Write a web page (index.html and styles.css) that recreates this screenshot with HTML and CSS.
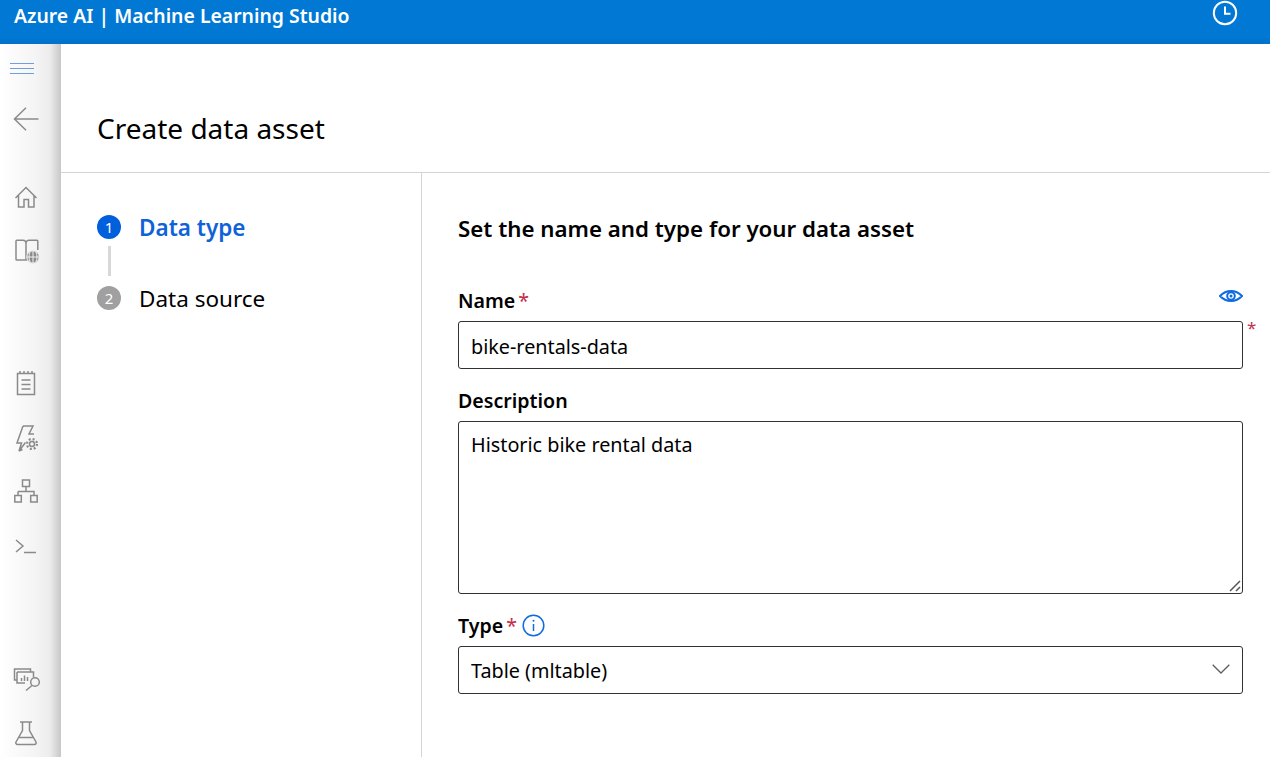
FILE: index.html
```html
<!DOCTYPE html>
<html lang="en">
<head>
    <meta charset="UTF-8">
    <meta name="viewport" content="width=device-width, initial-scale=1.0">
    <title>Create data asset</title>
    <link rel="stylesheet" href="styles.css">
</head>
<body>
    <header class="topbar">
        <span class="brand">Azure AI | Machine Learning Studio</span>
        <svg class="clock" viewBox="0 0 26 26" width="26" height="26"><circle cx="13" cy="13" r="11.2"/><path d="M13 6.500v7.200h5.500"/></svg>
    </header>
    <div class="app">
        <nav class="rail">
            <div class="rail-group menu-group">
                <svg class="rail-icon" viewBox="0 0 24 24"><path class="menu-lines" d="M-4 7.500h24M-4 12.500h24M-4 17.500h24"/></svg>
            </div>
            <div class="rail-group back-group">
                <svg class="rail-icon" viewBox="0 0 24 24"><path d="M.5 12h24M12 .8.5 12 12 23.200"/></svg>
            </div>
            <div class="rail-group home-group">
                <svg class="rail-icon" viewBox="0 0 24 24"><path d="M1.500 13 12 2.500 22.500 13M4.500 10.500v11.500h5.500v-7.500h4.500v7.500h5.500v-11.500"/></svg>
                <svg class="rail-icon" viewBox="0 0 24 24"><path d="M12 22H2.800a.8.8 0 0 1-.8-.8V3a.8.8 0 0 1 .8-.8H9c1.600 0 3 1.200 3 3zM12 5.200c0-1.800 1.400-3 3-3h8a.8.8 0 0 1 .8.8v9M12 22h1.500"/><circle class="globe" cx="19" cy="19" r="6.200"/><path class="globe-lines" d="M12.800 19h12.400M19 12.800v12.400M16.200 14c-1.600 3-1.600 7 0 10M21.800 14c1.600 3 1.600 7 0 10"/></svg>
            </div>
            <div class="rail-group tools-group">
                <svg class="rail-icon" viewBox="0 0 24 24"><path d="M3.500 2.500h17v21h-17zM7.500 9h9M7.500 13.500h9M7.500 18h9M6 0v3M10 0v3M14 0v3M18 0v3"/></svg>
                <svg class="rail-icon" viewBox="0 0 24 24"><path d="M9 1h10l-4 8h5M11.500 17.500 5 26l2.500-8H3L9 1M5 26l3.500-1.500"/><circle cx="18" cy="19" r="2.500"/><circle class="dash" cx="18" cy="19" r="5"/></svg>
                <svg class="rail-icon" viewBox="0 0 24 24"><path d="M8.500 1h7v6.500h-7zM12 7.500v5M4 12.500h16v4M4 12.500v4M.8 16.500h6.500v6.500H.8zM16.700 16.500h6.500v6.500h-6.500z"/></svg>
                <svg class="rail-icon terminal" viewBox="0 0 24 24"><path d="M2 5l7 6-7 6M10 17.500h12"/></svg>
            </div>
            <div class="rail-group bottom-group">
                <svg class="rail-icon" viewBox="0 0 24 24"><path d="M3 14H.5V3h16v3M3 6h16.500v5M3 6v11h8"/><path d="M7.500 15v-3M10.500 15V9.500M13.500 15v-4"/><circle cx="21" cy="16" r="4.300"/><path d="m18 19.500-6 5"/></svg>
                <svg class="rail-icon" viewBox="0 0 24 24"><path d="M6 1h12M8.500 1v8.500L2 21c-.6 1.200.1 2.500 1.500 2.500h17c1.400 0 2.100-1.300 1.500-2.500L15.500 9.500V1M5 16.500h14"/></svg>
            </div>
        </nav>
        <main class="content">
            <h1 class="page-title">Create data asset</h1>
            <div class="wizard">
                <aside class="steps">
                    <div class="step step-active">
                        <span class="step-num">1</span>
                        <span class="step-label">Data type</span>
                    </div>
                    <div class="step-line"></div>
                    <div class="step">
                        <span class="step-num">2</span>
                        <span class="step-label">Data source</span>
                    </div>
                </aside>
                <section class="form">
                    <h2 class="form-title">Set the name and type for your data asset</h2>

                    <div class="label-row name-row">
                        <span class="label">Name</span><span class="req">*</span>
                        <svg class="eye" viewBox="0 0 24 12" width="24" height="12"><path d="M1 6c3-3.200 6.800-5 11-5s8 1.800 11 5c-3 3.200-6.800 5-11 5S4 9.200 1 6z"/><circle cx="12" cy="6" r="3.800"/><circle class="eye-dot" cx="12" cy="6" r="1.500"/></svg>
                    </div>
                    <div class="field name-field">
                        bike-rentals-data
                        <span class="req outer-req">*</span>
                    </div>

                    <div class="label-row desc-row">
                        <span class="label">Description</span>
                    </div>
                    <div class="field desc-field">
                        Historic bike rental data
                        <svg class="grip" viewBox="0 0 12 12" width="12" height="12"><path d="M1 11 11 1M7 11l4-4"/></svg>
                    </div>

                    <div class="label-row type-row">
                        <span class="label">Type</span><span class="req">*</span>
                        <svg class="info" viewBox="0 0 23 23" width="23" height="23"><circle cx="11.500" cy="11.500" r="10.300"/><path d="M11.500 10v7"/><circle class="info-dot" cx="11.500" cy="6.800" r="1"/></svg>
                    </div>
                    <div class="field select-field">
                        Table (mltable)
                        <svg class="chevron" viewBox="0 0 18 10" width="18" height="10"><path d="M.7.7 9 9l8.300-8.300"/></svg>
                    </div>
                </section>
            </div>
        </main>
    </div>
</body>
</html>
```

FILE: styles.css
```css
html, body {
    height: 100%;
}
body {
    margin: 0;
    overflow: hidden;
    font-family: "Noto Sans", "Open Sans", Arial, sans-serif;
    color: #000;
    background-color: #fff;
}
.topbar {
    height: 44px;
    display: flex;
    justify-content: space-between;
    background: linear-gradient(180deg, #0078d4 0, #0078d4 36px, #0072ca 44px);
    color: #fff;
}
.brand {
    margin: 3px 0 0 14px;
    font-size: 19.4px;
    line-height: 26px;
    font-weight: 600;
}
.clock {
    margin-right: 32px;
    fill: none;
    stroke: #fff;
    stroke-width: 2;
}
.app {
    display: flex;
    height: calc(100vh - 44px);
}

/* left icon rail */
.rail {
    width: 61px;
    flex: none;
    display: flex;
    flex-direction: column;
    align-items: flex-start;
    padding-left: 14px;
    box-sizing: border-box;
    background: linear-gradient(90deg, #fff 0, #f4f4f4 36px, #ececec 50px, #c8c8c8 61px);
}
.rail-group {
    display: flex;
    flex-direction: column;
    gap: 29px;
}
.menu-group {
    margin-top: 12px;
}
.back-group {
    margin-top: 27px;
}
.home-group {
    margin-top: 54px;
}
.tools-group {
    margin-top: 109px;
    gap: 30px;
}
.bottom-group {
    margin-top: 107px;
    gap: 31px;
}
.rail-icon {
    width: 24px;
    height: 24px;
    fill: none;
    stroke: #8a8a8a;
    stroke-width: 1.500;
    overflow: visible;
}
.menu-lines {
    stroke: #6f9fe0;
    stroke-width: 1;
}
.terminal {
    margin-top: 2px;
}
.globe {
    fill: #8a8a8a;
    stroke: #f1f1f1;
    stroke-width: 1;
}
.globe-lines {
    stroke: #f1f1f1;
    stroke-width: 1;
}
.dash {
    stroke-width: 2.200;
    stroke-dasharray: 2 1.930;
}

/* main content */
.content {
    flex: 1;
    display: flex;
    flex-direction: column;
    min-width: 0;
}
.page-title {
    margin: 0;
    height: 129px;
    box-sizing: border-box;
    padding: 64px 0 0 36px;
    font-size: 28px;
    line-height: 40px;
    font-weight: 400;
    border-bottom: 1px solid #d4d4d4;
}
.wizard {
    flex: 1;
    display: flex;
}
.steps {
    width: 361px;
    flex: none;
    box-sizing: border-box;
    padding: 40px 0 0 36px;
    border-right: 1px solid #d4d4d4;
}
.step {
    display: flex;
    align-items: center;
    gap: 18px;
    height: 28px;
    font-size: 22.5px;
}
.step-num {
    width: 24px;
    height: 24px;
    border-radius: 50%;
    background-color: #a0a0a0;
    color: #fff;
    font-size: 15px;
    line-height: 24px;
    text-align: center;
}
.step-active .step-num {
    background-color: #005fdc;
}
.step-active .step-label {
    color: #0f62d8;
    font-weight: 600;
}
.step-line {
    width: 3px;
    height: 30px;
    margin: 5px 0 8px 11px;
    background-color: #d8d8d8;
}

/* form */
.form {
    flex: 1;
    min-width: 0;
    padding: 0 27px 0 36px;
}
.form-title {
    margin: 41px 0 0;
    font-size: 22.3px;
    line-height: 30px;
    font-weight: 600;
}
.label-row {
    display: flex;
    align-items: center;
    height: 26px;
    margin-bottom: 8px;
    font-size: 19.600px;
}
.name-row {
    margin-top: 43px;
}
.desc-row, .type-row {
    margin-top: 18px;
}
.label {
    font-weight: 600;
}
.req {
    color: #c4314b;
    margin-left: 3px;
}
.eye {
    margin-left: auto;
    margin-bottom: 8px;
    fill: none;
    stroke: #0f6ce0;
    stroke-width: 2;
}
.eye-dot, .info-dot {
    fill: #0f6ce0;
    stroke: none;
}
.info {
    margin-left: 5px;
    fill: none;
    stroke: #0f6ce0;
    stroke-width: 1.500;
}
.field {
    position: relative;
    box-sizing: border-box;
    border: 1px solid #323130;
    border-radius: 3px;
    padding: 0 12px;
    font-size: 19.8px;
    line-height: 46px;
}
.name-field {
    height: 48px;
    padding-top: 2px;
}
.select-field {
    height: 48px;
    padding-top: 1px;
}
.desc-field {
    height: 173px;
}
.outer-req {
    position: absolute;
    left: 100%;
    top: -17px;
    margin-left: 5px;
    font-size: 17px;
}
.grip {
    position: absolute;
    right: 1px;
    bottom: 1px;
    fill: none;
    stroke: #555;
    stroke-width: 1.500;
}
.chevron {
    position: absolute;
    right: 12px;
    top: 17px;
    fill: none;
    stroke: #605e5c;
    stroke-width: 1.300;
}
```
